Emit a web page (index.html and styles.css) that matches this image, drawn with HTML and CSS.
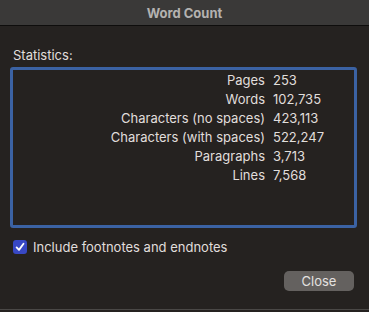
FILE: index.html
```html
<!DOCTYPE html>
<html lang="en">

<head>
    <meta charset="UTF-8">
    <meta name="viewport" content="width=device-width, initial-scale=1.0">
    <title>Word Count</title>
    <link rel="stylesheet" href="styles.css">
</head>

<body>
    <div class="window">
        <header class="titlebar">Word Count</header>
        <div class="content">
            <p class="section-label">Statistics:</p>
            <div class="stats-box">
                <div class="stats">
                    <span class="stat-name">Pages</span><span class="stat-value">253</span>
                    <span class="stat-name">Words</span><span class="stat-value">102,735</span>
                    <span class="stat-name">Characters (no spaces)</span><span class="stat-value">423,113</span>
                    <span class="stat-name">Characters (with spaces)</span><span class="stat-value">522,247</span>
                    <span class="stat-name">Paragraphs</span><span class="stat-value">3,713</span>
                    <span class="stat-name">Lines</span><span class="stat-value">7,568</span>
                </div>
            </div>
            <label class="check-row">
                <span class="checkbox">
                    <svg width="10" height="10" viewBox="0 0 10 10">
                        <path d="M1.6 5.4 L4 7.9 L8.5 1.8" fill="none" stroke="#fff" stroke-width="1.8"
                            stroke-linecap="round" stroke-linejoin="round" />
                    </svg>
                </span>
                Include footnotes and endnotes
            </label>
            <div class="button-row">
                <button class="close-button">Close</button>
            </div>
        </div>
    </div>
</body>

</html>
```

FILE: styles.css
```css
/* Word count dialog */
body {
    margin: 0;
    padding: 0;
    background-color: #252220;
    font-family: Inter, "Liberation Sans", Arial, sans-serif;
    font-size: 13px;
    color: #e0dedc;
}

.window {
    height: 309px;
    border-bottom: 1px solid #4a4846;
    background-color: #252220;
}

.titlebar {
    height: 25px;
    line-height: 26px;
    text-align: center;
    background-color: #3a3938;
    border-bottom: 1px solid #0e0d0c;
    color: #b4b2b0;
    font-weight: bold;
    font-size: 13px;
}

.content {
    padding: 0 12px 0 10px;
}

.section-label {
    margin: 21px 0 0 3px;
    line-height: 16px;
}

.stats-box {
    margin-top: 4px;
    height: 154px;
    border: 3px solid #3b62a3;
    border-radius: 3px;
    padding-top: 1px;
}

.stats {
    display: grid;
    grid-template-columns: 252px auto;
    column-gap: 8px;
    line-height: 19px;
}

.stat-name {
    text-align: right;
}

.check-row {
    display: flex;
    align-items: center;
    gap: 6px;
    margin: 11px 0 0 3px;
    line-height: 16px;
}

.checkbox {
    display: flex;
    align-items: center;
    justify-content: center;
    width: 14px;
    height: 14px;
    border-radius: 3px;
    background-color: #3848c4;
}

.button-row {
    display: flex;
    justify-content: flex-end;
    margin-top: 16px;
    padding-right: 3px;
}

.close-button {
    width: 70px;
    height: 20px;
    border: none;
    border-radius: 5px;
    background-color: #64615f;
    color: #e4e2e0;
    font-family: Inter, "Liberation Sans", Arial, sans-serif;
    font-size: 13px;
    padding: 0;
}
```
